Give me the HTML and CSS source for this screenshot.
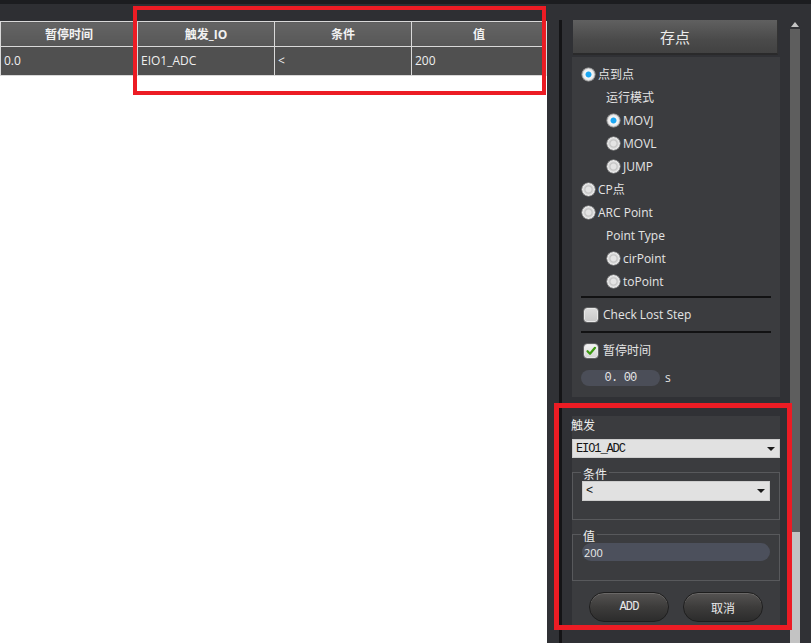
FILE: index.html
```html
<!DOCTYPE html>
<html>
<head>
<meta charset="utf-8">
<link rel="stylesheet" href="styles.css">
</head>
<body>
<div class="app">
  <div class="topline"></div>
  <div class="main">
    <div class="left">
      <div class="left-strip"></div>
      <table class="grid">
        <thead>
          <tr><th class="c1">暂停时间</th><th class="c2">触发_IO</th><th class="c3">条件</th><th class="c4">值</th></tr>
        </thead>
        <tbody>
          <tr><td>0.0</td><td>EIO1_ADC</td><td>&lt;</td><td>200</td></tr>
        </tbody>
      </table>
      <div class="blank"></div>
    </div>
    <div class="right">
      <div class="gap-a"></div>
      <div class="vline"></div>
      <div class="gap-b"></div>
      <div class="content">
        <div class="save-btn">存点</div>
        <div class="panel p1">
          <div class="row"><span class="radio on"></span><span class="lbl">点到点</span></div>
          <div class="row ind-t"><span class="lbl">运行模式</span></div>
          <div class="row ind-r"><span class="radio on"></span><span class="lbl">MOVJ</span></div>
          <div class="row ind-r"><span class="radio"></span><span class="lbl">MOVL</span></div>
          <div class="row ind-r"><span class="radio"></span><span class="lbl">JUMP</span></div>
          <div class="row"><span class="radio"></span><span class="lbl">CP点</span></div>
          <div class="row"><span class="radio"></span><span class="lbl">ARC Point</span></div>
          <div class="row ind-t"><span class="lbl">Point Type</span></div>
          <div class="row ind-r"><span class="radio"></span><span class="lbl">cirPoint</span></div>
          <div class="row ind-r"><span class="radio"></span><span class="lbl">toPoint</span></div>
          <div class="sep"></div>
          <div class="row chk-row first"><span class="check"></span><span class="lbl cl">Check Lost Step</span></div>
          <div class="sep s2"></div>
          <div class="row chk-row second"><span class="check on"><svg width="12" height="12" viewBox="0 0 12 12"><path d="M2.5 6.2 L5 8.8 L10 2.8" fill="none" stroke="#3d9a12" stroke-width="2.2" stroke-linecap="round" stroke-linejoin="round"/></svg></span><span class="lbl cl">暂停时间</span></div>
          <div class="time-row"><span class="time-input">0. 00</span><span class="unit">s</span></div>
        </div>
        <div class="panel p2">
          <div class="p2-label">触发</div>
          <div class="combo wide"><span class="combo-text">EIO1_ADC</span><span class="tri"></span></div>
          <div class="group g1">
            <div class="group-title">条件</div>
            <div class="combo inner"><span class="combo-text">&lt;</span><span class="tri"></span></div>
          </div>
          <div class="group g2">
            <div class="group-title">值</div>
            <div class="value-input">200</div>
          </div>
          <div class="btns">
            <div class="pill mono">ADD</div>
            <div class="pill">取消</div>
          </div>
        </div>
      </div>
      <div class="gutter"></div>
      <div class="scroll">
        <div class="arrow"></div>
        <div class="track"></div>
        <div class="thumb"></div>
      </div>
      <div class="edge"></div>
    </div>
  </div>
  <div class="mark m1"></div>
  <div class="mark m2"></div>
</div>
</body>
</html>
```
FILE: styles.css
```css
* { box-sizing: border-box; margin: 0; padding: 0; }
html, body { width: 811px; height: 643px; overflow: hidden; }
body {
  background: #303135;
  font-family: "Open Sans", "Noto Sans CJK SC", sans-serif;
  font-size: 12px;
  color: #e6e6e6;
}
.app { position: relative; width: 811px; height: 643px; display: flex; flex-direction: column; }
.topline { height: 4px; background: #1c1d20; flex: none; }
.main { flex: 1; display: flex; }

/* left */
.left { width: 547px; display: flex; flex-direction: column; background: #fff; flex: none; }
.left-strip { height: 17px; background: #2e2f33; flex: none; }
.grid { width: 546px; border-collapse: collapse; table-layout: fixed; }
.grid th, .grid td { border: 1px solid #d9d9d9; }
.grid th {
  height: 25px;
  background: linear-gradient(#646464, #575757);
  color: #f2f2f2;
  font-weight: bold;
  font-size: 12px;
  text-align: center;
}
.grid td {
  height: 29px;
  background: #505050;
  color: #efefef;
  padding-left: 3px;
  padding-bottom: 1px;
  font-size: 12px;
}
.c1, .c2, .c3 { width: 137px; }
.c4 { width: 135px; }
.blank { flex: 1; }

/* right */
.right { flex: 1; display: flex; }
.gap-a { width: 12px; }
.vline { width: 3px; background: #141416; margin-top: 16px; }
.gap-b { width: 10px; }
.content { width: 208px; padding-top: 16px; display: flex; flex-direction: column; }
.save-btn {
  height: 35px;
  margin: 0 2px 0 1px;
  background: linear-gradient(#606060, #4a4a4a 60%, #424242);
  border-bottom: 2px solid #2a2a2b;
  border-right: 1px solid #333;
  color: #ededed;
  font-family: "Noto Sans CJK SC", sans-serif;
  font-size: 15px;
  display: flex; align-items: center; justify-content: center;
}
.panel { background: #3b3c3f; }
.p1 { margin-top: 2px; height: 340px; padding: 6px 9px 0 10px; display: flex; flex-direction: column; }
.row { height: 23px; display: flex; align-items: center; flex: none; }
.ind-t { padding-left: 24px; }
.ind-r { padding-left: 25px; }
.lbl { color: #e4e4e4; margin-left: 3px; line-height: 16px; white-space: nowrap; }
.ind-t .lbl { margin-left: 0; }
.radio {
  width: 13px; height: 13px; border-radius: 50%; flex: none;
  background: radial-gradient(circle at 50% 50%, #e4e4e4 0 2.5px, #c4c4c4 3.5px, #dedede 5px, #f0f0f0 6px, #c8c8c8 6.5px);
  box-shadow: 0 0 0 0.5px #a8a8a8;
}
.radio.on {
  background: radial-gradient(circle at 50% 50%, #1ba6f2 0 2.6px, #f6f6f6 3.4px, #ececec 5px, #c4c4c4 6.5px);
}
.sep { height: 2px; background: #121213; margin: 3px 0 0 -1px; width: 190px; flex: none; }
.s2 { margin-top: 5px; }
.chk-row.first { margin-top: 5px; padding-left: 2px; }
.chk-row.second { margin-top: 6px; padding-left: 2px; }
.check {
  width: 14px; height: 14px; border-radius: 3px; flex: none;
  background: linear-gradient(#dcdcdc, #c9c9c9);
  border: 1px solid #e8e8e8;
  box-shadow: 0 0 0 0.5px #8a8a8a;
  display: flex; align-items: center; justify-content: center;
}
.check.on { background: linear-gradient(#f2f2f2, #d6d6d6); }
.cl { margin-left: 5px; }
.time-row { margin-top: 7px; display: flex; align-items: center; margin-left: -1px; }
.time-input {
  width: 79px; height: 16px; border-radius: 8px;
  background: #4b4e58;
  color: #e6e6e6;
  font-family: "Liberation Mono", monospace;
  font-size: 12px; letter-spacing: -0.8px;
  display: flex; align-items: center; justify-content: center;
}
.unit { margin-left: 5px; color: #e4e4e4; font-size: 12px; }

.p2 { margin-top: 19px; padding-bottom: 3px; display: flex; flex-direction: column; }
.p2-label {
  height: 18px; line-height: 18px; margin-left: -1px; margin-top: 0;
  font-family: "Noto Sans CJK SC", sans-serif; font-size: 12px; color: #ececec;
}
.combo {
  background: #e1e1e1;
  border: 1px solid #cdcdcd;
  display: flex; align-items: center; justify-content: space-between;
  color: #141414;
}
.combo-text { font-family: "Liberation Mono", "Noto Sans CJK SC", monospace; font-size: 12px; letter-spacing: -1.1px; padding-left: 3px; }
.tri { width: 0; height: 0; border-left: 4px solid transparent; border-right: 4px solid transparent; border-top: 4px solid #1a1a1a; margin-right: 4px; }
.wide { height: 19px; margin-top: 5px; }
.group { border: 1px solid #58595c; padding: 0 9px 13px; display: flex; flex-direction: column; margin-top: 14px; }
.group-title {
  align-self: flex-start;
  margin: -7px 0 0 -1px;
  padding: 0 2px;
  height: 16px; line-height: 16px;
  background: #3b3c3f;
  font-family: "Noto Sans CJK SC", sans-serif; font-size: 12px; color: #ececec;
}
.inner { height: 20px; margin-top: -1px; }
.g1 { height: 48px; }
.g2 { height: 47px; }
.value-input {
  height: 18px; margin-top: -1px; border-radius: 9px;
  background: #4c505c;
  color: #eaeaea; font-size: 11px; padding-left: 2px;
  display: flex; align-items: center;
}
.btns { display: flex; justify-content: center; gap: 14px; margin-top: 11px; }
.pill {
  width: 80px; height: 30px; border-radius: 15px;
  background: linear-gradient(#555352, #3d3c3b 50%, #2c2c2c);
  border: 1px solid #1e1e1e;
  box-shadow: inset 0 1px 0 #6a6867;
  color: #e8e8e8;
  font-family: "Noto Sans CJK SC", sans-serif; font-size: 12px;
  display: flex; align-items: center; justify-content: center;
}
.pill.mono { font-family: "Liberation Mono", monospace; font-size: 12px; letter-spacing: -0.8px; }

.gutter { width: 10px; }
.scroll { width: 10px; display: flex; flex-direction: column; align-items: center; padding-top: 18px; }
.arrow { width: 0; height: 0; border-left: 4px solid transparent; border-right: 4px solid transparent; border-bottom: 5px solid #c4c4c4; }
.track { width: 10px; height: 503px; margin-top: 2px; background: #5e5e5e; }
.thumb { width: 10px; flex: 1; background: #c3c3c3; }
.edge { flex: 1; }

.mark { position: absolute; border: 4px solid #ec1c24; }
.m1 { left: 133px; top: 6px; width: 413px; height: 89px; }
.m2 { left: 554px; top: 403px; width: 238px; height: 227px; border-width: 5px; }
```
